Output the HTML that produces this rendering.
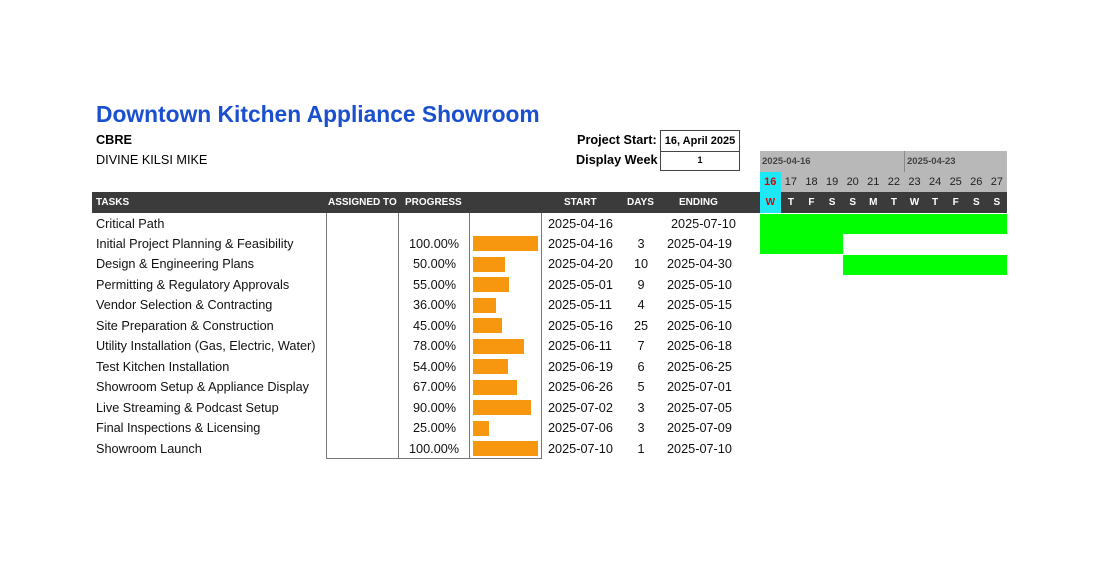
<!DOCTYPE html>
<html><head><meta charset="utf-8"><style>
body{margin:0;width:1100px;height:578px;background:#fff;position:relative;font-family:"Liberation Sans",Arial,sans-serif;overflow:hidden}
.a{position:absolute;white-space:nowrap}
.t{font-size:12.7px;color:#111}
.h{font-size:10px;font-weight:bold;color:#fff}
.bar{position:absolute;left:473px;height:15px;background:#f7970f}
.g{position:absolute;background:#00ff00}
.dn{position:absolute;top:172px;width:20.6px;height:20px;font-size:11px;color:#222;text-align:center;line-height:20px}
.dw{position:absolute;top:192px;width:20.6px;height:21px;font-size:10px;font-weight:bold;color:#fff;text-align:center;line-height:21px}
.c{text-align:center}
</style></head><body>
<div class="a" style="left:96px;top:101px;font-size:22.8px;font-weight:bold;color:#1a4fcf">Downtown Kitchen Appliance Showroom</div>
<div class="a" style="left:96px;top:133px;font-size:12.7px;font-weight:bold">CBRE</div>
<div class="a" style="left:96px;top:153px;font-size:12.7px">DIVINE KILSI MIKE</div>
<div class="a" style="left:577px;top:133px;font-size:12.7px;font-weight:bold">Project Start:</div>
<div class="a" style="left:576px;top:153px;font-size:12.7px;font-weight:bold">Display Week</div>
<div class="a" style="left:660px;top:130px;width:78px;height:20px;border:1.5px solid #444;font-size:11px;font-weight:bold;text-align:center;line-height:20px">16, April 2025</div>
<div class="a" style="left:660px;top:151px;width:78px;height:19px;border:1.5px solid #444;border-top:none;font-size:9px;font-weight:bold;text-align:center;line-height:19px">1</div>
<div class="a" style="left:760px;top:151px;width:247px;height:21px;background:#b8b8b8"></div>
<div class="a" style="left:904px;top:151px;width:1px;height:41px;background:#888"></div>
<div class="a" style="left:762px;top:156px;font-size:9.5px;font-weight:bold;color:#444">2025-04-16</div>
<div class="a" style="left:907px;top:156px;font-size:9.5px;font-weight:bold;color:#444">2025-04-23</div>
<div class="a" style="left:760px;top:172px;width:247px;height:20px;background:#b8b8b8"></div>
<div class="a" style="left:760px;top:172px;width:20.6px;height:41px;background:#1ee8f5"></div>
<div class="dn" style="left:760px;color:#d00;font-weight:bold">16</div><div class="dn" style="left:780.6px">17</div><div class="dn" style="left:801.2px">18</div><div class="dn" style="left:821.8px">19</div><div class="dn" style="left:842.4px">20</div><div class="dn" style="left:863px">21</div><div class="dn" style="left:883.6px">22</div><div class="dn" style="left:904.2px">23</div><div class="dn" style="left:924.8px">24</div><div class="dn" style="left:945.4px">25</div><div class="dn" style="left:966px">26</div><div class="dn" style="left:986.6px">27</div>
<div class="a" style="left:92px;top:192px;width:915px;height:21px;background:#3b3b3b"></div>
<div class="a" style="left:760px;top:192px;width:20.6px;height:21px;background:#1ee8f5"></div>
<div class="dw" style="left:760px;color:#d00">W</div><div class="dw" style="left:780.6px">T</div><div class="dw" style="left:801.2px">F</div><div class="dw" style="left:821.8px">S</div><div class="dw" style="left:842.4px">S</div><div class="dw" style="left:863px">M</div><div class="dw" style="left:883.6px">T</div><div class="dw" style="left:904.2px">W</div><div class="dw" style="left:924.8px">T</div><div class="dw" style="left:945.4px">F</div><div class="dw" style="left:966px">S</div><div class="dw" style="left:986.6px">S</div>
<div class="a h" style="left:96px;top:197px">TASKS</div>
<div class="a h" style="left:328px;top:197px">ASSIGNED TO</div>
<div class="a h" style="left:405px;top:197px">PROGRESS</div>
<div class="a h" style="left:564px;top:197px">START</div>
<div class="a h" style="left:627px;top:197px">DAYS</div>
<div class="a h" style="left:679px;top:197px">ENDING</div>
<div class="a" style="left:326px;top:213px;width:214px;height:245px;border:1px solid #777;border-top:none"></div>
<div class="a" style="left:398px;top:213px;width:1px;height:246px;background:#777"></div>
<div class="a" style="left:469px;top:213px;width:1px;height:246px;background:#777"></div>
<div class="g" style="left:760px;top:214px;width:247px;height:20px"></div>
<div class="g" style="left:760px;top:234px;width:83px;height:20px"></div>
<div class="g" style="left:843px;top:255px;width:164px;height:20px"></div>
<div class="a t" style="left:96px;top:217px">Critical Path</div>
<div class="a t" style="left:548px;top:217px">2025-04-16</div>
<div class="a t" style="left:671px;top:217px">2025-07-10</div>

<div class="a t" style="left:96px;top:237px">Initial Project Planning &amp; Feasibility</div><div class="a t" style="left:409px;top:237px">100.00%</div><div class="bar" style="top:236px;width:65px"></div><div class="a t" style="left:548px;top:237px">2025-04-16</div><div class="a t c" style="left:626px;top:237px;width:30px">3</div><div class="a t" style="left:667px;top:237px">2025-04-19</div>
<div class="a t" style="left:96px;top:257px">Design &amp; Engineering Plans</div><div class="a t" style="left:413px;top:257px">50.00%</div><div class="bar" style="top:257px;width:32px"></div><div class="a t" style="left:548px;top:257px">2025-04-20</div><div class="a t c" style="left:626px;top:257px;width:30px">10</div><div class="a t" style="left:667px;top:257px">2025-04-30</div>
<div class="a t" style="left:96px;top:278px">Permitting &amp; Regulatory Approvals</div><div class="a t" style="left:413px;top:278px">55.00%</div><div class="bar" style="top:277px;width:36px"></div><div class="a t" style="left:548px;top:278px">2025-05-01</div><div class="a t c" style="left:626px;top:278px;width:30px">9</div><div class="a t" style="left:667px;top:278px">2025-05-10</div>
<div class="a t" style="left:96px;top:298px">Vendor Selection &amp; Contracting</div><div class="a t" style="left:413px;top:298px">36.00%</div><div class="bar" style="top:298px;width:23px"></div><div class="a t" style="left:548px;top:298px">2025-05-11</div><div class="a t c" style="left:626px;top:298px;width:30px">4</div><div class="a t" style="left:667px;top:298px">2025-05-15</div>
<div class="a t" style="left:96px;top:319px">Site Preparation &amp; Construction</div><div class="a t" style="left:413px;top:319px">45.00%</div><div class="bar" style="top:318px;width:29px"></div><div class="a t" style="left:548px;top:319px">2025-05-16</div><div class="a t c" style="left:626px;top:319px;width:30px">25</div><div class="a t" style="left:667px;top:319px">2025-06-10</div>
<div class="a t" style="left:96px;top:339px">Utility Installation (Gas, Electric, Water)</div><div class="a t" style="left:413px;top:339px">78.00%</div><div class="bar" style="top:339px;width:51px"></div><div class="a t" style="left:548px;top:339px">2025-06-11</div><div class="a t c" style="left:626px;top:339px;width:30px">7</div><div class="a t" style="left:667px;top:339px">2025-06-18</div>
<div class="a t" style="left:96px;top:360px">Test Kitchen Installation</div><div class="a t" style="left:413px;top:360px">54.00%</div><div class="bar" style="top:359px;width:35px"></div><div class="a t" style="left:548px;top:360px">2025-06-19</div><div class="a t c" style="left:626px;top:360px;width:30px">6</div><div class="a t" style="left:667px;top:360px">2025-06-25</div>
<div class="a t" style="left:96px;top:380px">Showroom Setup &amp; Appliance Display</div><div class="a t" style="left:413px;top:380px">67.00%</div><div class="bar" style="top:380px;width:44px"></div><div class="a t" style="left:548px;top:380px">2025-06-26</div><div class="a t c" style="left:626px;top:380px;width:30px">5</div><div class="a t" style="left:667px;top:380px">2025-07-01</div>
<div class="a t" style="left:96px;top:401px">Live Streaming &amp; Podcast Setup</div><div class="a t" style="left:413px;top:401px">90.00%</div><div class="bar" style="top:400px;width:58px"></div><div class="a t" style="left:548px;top:401px">2025-07-02</div><div class="a t c" style="left:626px;top:401px;width:30px">3</div><div class="a t" style="left:667px;top:401px">2025-07-05</div>
<div class="a t" style="left:96px;top:421px">Final Inspections &amp; Licensing</div><div class="a t" style="left:413px;top:421px">25.00%</div><div class="bar" style="top:421px;width:16px"></div><div class="a t" style="left:548px;top:421px">2025-07-06</div><div class="a t c" style="left:626px;top:421px;width:30px">3</div><div class="a t" style="left:667px;top:421px">2025-07-09</div>
<div class="a t" style="left:96px;top:442px">Showroom Launch</div><div class="a t" style="left:409px;top:442px">100.00%</div><div class="bar" style="top:441px;width:65px"></div><div class="a t" style="left:548px;top:442px">2025-07-10</div><div class="a t c" style="left:626px;top:442px;width:30px">1</div><div class="a t" style="left:667px;top:442px">2025-07-10</div>
</body></html>
